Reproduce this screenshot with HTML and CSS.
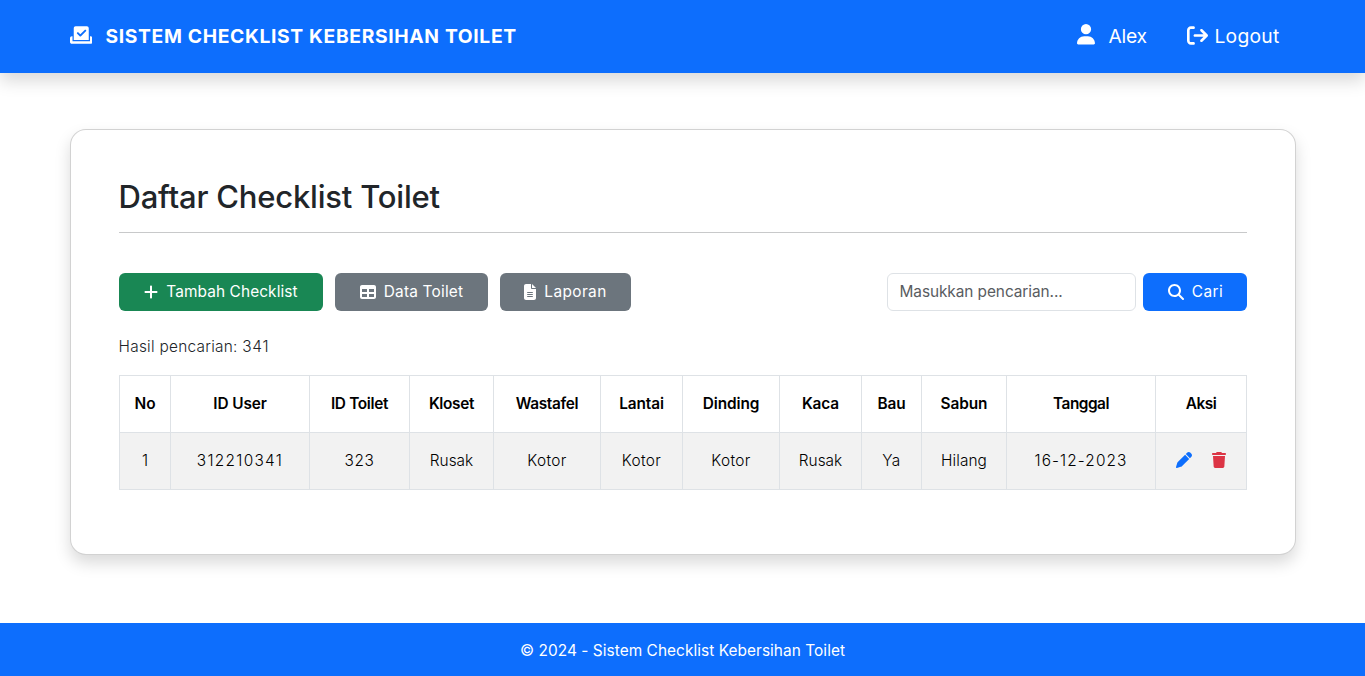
FILE: index.html
```html
<!DOCTYPE html>
<html lang="id">
<head>
<meta charset="utf-8">
<title>Sistem Checklist Kebersihan Toilet</title>
<link rel="stylesheet" href="styles.css">
</head>
<body>
<header class="navbar">
  <div class="container navbar-inner">
    <a class="brand">
      <svg class="brand-icon" viewBox="0 0 576 512"><path d="M96 80c0-26.500 21.500-48 48-48H432c26.500 0 48 21.500 48 48V384H96V80zm313 47c-9.400-9.400-24.600-9.400-33.900 0l-111 111-47-47c-9.400-9.400-24.600-9.400-33.900 0s-9.400 24.600 0 33.900l64 64c9.400 9.400 24.600 9.400 33.900 0L409 161c9.400-9.400 9.400-24.600 0-33.900zM0 336c0-26.500 21.500-48 48-48H64V416H512V288h16c26.500 0 48 21.500 48 48v96c0 26.500-21.500 48-48 48H48c-26.500 0-48-21.500-48-48V336z"/></svg>
      <span class="brand-name">SISTEM CHECKLIST KEBERSIHAN TOILET</span>
    </a>
    <nav class="nav">
      <a class="nav-user">
        <svg class="user-icon" viewBox="0 0 448 512"><path d="M224 256A128 128 0 1 0 224 0a128 128 0 1 0 0 256zm-45.700 48C79.800 304 0 383.800 0 482.300C0 498.700 13.300 512 29.700 512H418.300c16.400 0 29.700-13.300 29.700-29.700C448 383.800 368.200 304 269.700 304H178.300z"/></svg>
        <span>Alex</span>
      </a>
      <a class="nav-logout">
        <svg class="logout-icon" viewBox="0 0 512 512"><path d="M502.600 278.600c12.500-12.500 12.500-32.800 0-45.300l-128-128c-12.500-12.500-32.800-12.500-45.300 0s-12.500 32.800 0 45.300L402.700 224 192 224c-17.700 0-32 14.300-32 32s14.300 32 32 32l210.700 0-73.400 73.400c-12.500 12.500-12.500 32.800 0 45.300s32.800 12.500 45.300 0l128-128zM160 96c17.700 0 32-14.300 32-32s-14.300-32-32-32L96 32C43 32 0 75 0 128L0 384c0 53 43 96 96 96l64 0c17.700 0 32-14.300 32-32s-14.300-32-32-32l-64 0c-17.700 0-32-14.300-32-32l0-256c0-17.700 14.300-32 32-32l64 0z"/></svg>
        <span>Logout</span>
      </a>
    </nav>
  </div>
</header>

<main class="container card">
  <h2 class="title">Daftar Checklist Toilet</h2>
  <div class="toolbar">
    <a class="btn btn-add">
      <svg class="w14" viewBox="0 0 448 512"><path d="M256 80c0-17.700-14.300-32-32-32s-32 14.300-32 32V224H48c-17.700 0-32 14.300-32 32s14.300 32 32 32H192V432c0 17.700 14.300 32 32 32s32-14.300 32-32V288H400c17.700 0 32-14.300 32-32s-14.300-32-32-32H256V80z"/></svg>
      <span>Tambah Checklist</span>
    </a>
    <a class="btn btn-data">
      <svg class="w16" viewBox="0 0 512 512"><path d="M64 256V160H224v96H64zm0 64H224v96H64V320zm224 96V320H448v96H288zM448 256H288V160H448v96zM64 32C28.700 32 0 60.700 0 96V416c0 35.300 28.700 64 64 64H448c35.300 0 64-28.700 64-64V96c0-35.300-28.700-64-64-64H64z"/></svg>
      <span>Data Toilet</span>
    </a>
    <a class="btn btn-report">
      <svg class="w12" viewBox="0 0 384 512"><path d="M64 0C28.700 0 0 28.700 0 64V448c0 35.300 28.700 64 64 64H320c35.300 0 64-28.700 64-64V160H256c-17.700 0-32-14.300-32-32V0H64zM256 0V128H384L256 0zM112 256H272c8.800 0 16 7.200 16 16s-7.200 16-16 16H112c-8.800 0-16-7.200-16-16s7.200-16 16-16zm0 64H272c8.800 0 16 7.200 16 16s-7.200 16-16 16H112c-8.800 0-16-7.200-16-16s7.200-16 16-16zm0 64H272c8.800 0 16 7.200 16 16s-7.200 16-16 16H112c-8.800 0-16-7.200-16-16s7.200-16 16-16z"/></svg>
      <span>Laporan</span>
    </a>
    <form class="search">
      <input class="search-input" type="text" placeholder="Masukkan pencarian...">
      <button class="btn btn-search" type="button">
        <svg class="w16" viewBox="0 0 512 512"><path d="M416 208c0 45.900-14.900 88.300-40 122.700L502.600 457.400c12.500 12.500 12.500 32.800 0 45.300s-32.800 12.500-45.300 0L330.700 376c-34.400 25.200-76.800 40-122.700 40C93.100 416 0 322.900 0 208S93.100 0 208 0S416 93.100 416 208zM208 352a144 144 0 1 0 0-288 144 144 0 1 0 0 288z"/></svg>
        <span>Cari</span>
      </button>
    </form>
  </div>
  <p class="result">Hasil pencarian: <span class="digits">341</span></p>
  <table class="table">
    <colgroup>
      <col class="c-no"><col class="c-user"><col class="c-toilet"><col class="c-kloset"><col class="c-wastafel"><col class="c-lantai"><col class="c-dinding"><col class="c-kaca"><col class="c-bau"><col class="c-sabun"><col class="c-tanggal"><col class="c-aksi">
    </colgroup>
    <thead>
      <tr><th>No</th><th>ID User</th><th class="snug">ID Toilet</th><th class="snug">Kloset</th><th class="snug">Wastafel</th><th>Lantai</th><th>Dinding</th><th>Kaca</th><th>Bau</th><th>Sabun</th><th class="tight">Tanggal</th><th class="tight">Aksi</th></tr>
    </thead>
    <tbody>
      <tr>
        <td>1</td><td class="digits">312210341</td><td class="code">323</td><td>Rusak</td><td class="wide">Kotor</td><td class="wide">Kotor</td><td class="wide">Kotor</td><td>Rusak</td><td class="wide">Ya</td><td class="medium">Hilang</td><td class="date">16-12-2023</td>
        <td>
          <div class="actions">
            <svg class="w16 edit" viewBox="0 0 512 512"><path d="M362.700 19.300L314.300 67.700 444.300 197.700l48.400-48.400c25-25 25-65.500 0-90.500L453.300 19.300c-25-25-65.500-25-90.500 0zm-71 71L58.600 323.500c-10.400 10.400-18 23.300-22.200 37.400L1 481.200C-1.500 489.700 .8 498.800 7 505s15.300 8.500 23.700 6.100l120.300-35.400c14.100-4.200 27-11.800 37.400-22.200L421.700 220.300 291.700 90.300z"/></svg>
            <svg class="w14 delete" viewBox="0 0 448 512"><path d="M135.200 17.700L128 32H32C14.300 32 0 46.300 0 64S14.300 96 32 96H416c17.700 0 32-14.300 32-32s-14.300-32-32-32H320l-7.200-14.300C307.400 6.800 296.300 0 284.200 0H163.800c-12.100 0-23.200 6.800-28.600 17.700zM416 128H32L53.200 467c1.600 25.300 22.600 45 47.900 45H346.900c25.300 0 46.300-19.700 47.900-45L416 128z"/></svg>
          </div>
        </td>
      </tr>
    </tbody>
  </table>
</main>

<footer class="footer">© 2024 - Sistem Checklist Kebersihan Toilet</footer>
</body>
</html>
```
FILE: styles.css
```css
* { box-sizing: border-box; }

body {
  margin: 0;
  min-height: 100vh;
  display: flex;
  flex-direction: column;
  background: #fff;
  color: #212529;
  font-family: Inter, "Open Sans", sans-serif;
  font-size: 15.4px;
  line-height: 24px;
  overflow: hidden;
}

svg { display: block; fill: currentColor; flex: none; }

.container { width: 1226px; margin: 0 auto; }

.navbar {
  height: 73px;
  background: #0d6efd;
  color: #fff;
  box-shadow: 0 8px 16px rgba(0, 0, 0, .15);
}
.navbar-inner {
  height: 72px;
  display: flex;
  align-items: center;
  justify-content: space-between;
}
.brand { display: flex; align-items: center; gap: 13.5px; }
.brand-icon { width: 22.5px; height: 20px; margin-top: -2px; }
.brand-name { font-size: 19.3px; font-weight: 700; letter-spacing: .64px; }
.nav { display: flex; gap: 40px; padding-right: 16px; font-size: 19.3px; }
.nav-user, .nav-logout { display: flex; align-items: center; }
.nav-user { gap: 13px; letter-spacing: -.2px; }
.nav-user span { margin-top: -1px; }
.user-icon { width: 18px; height: 20.5px; margin-top: -3px; }
.nav-logout { gap: 6.5px; letter-spacing: .25px; }
.logout-icon { width: 21px; height: 21px; margin-top: -1px; }

.card {
  height: 426px;
  margin-top: 56px;
  padding: 48px;
  border: 1px solid rgba(0, 0, 0, .175);
  border-radius: 16px;
  background: #fff;
  box-shadow: 0 8px 16px rgba(0, 0, 0, .15);
}
.title {
  height: 55px;
  margin: 0 0 40px;
  border-bottom: 1px solid #c8c9ca;
  font-size: 31px;
  font-weight: 450;
  line-height: 37px;
  letter-spacing: -.2px;
}

.toolbar { display: flex; gap: 12px; }
.btn {
  height: 38px;
  display: flex;
  align-items: center;
  justify-content: center;
  gap: 8px;
  padding: 0 0 0 1px;
  border: 0;
  border-radius: 6px;
  color: #fff;
  font: inherit;
}
.btn svg { margin-top: -1px; }
.btn-add { width: 204px; background: #198754; letter-spacing: .1px; }
.btn-data { width: 153px; background: #6c757d; letter-spacing: .2px; }
.btn-report { width: 131px; background: #6c757d; letter-spacing: .4px; }
.btn-search { width: 104px; background: #0d6efd; letter-spacing: .5px; padding-left: 2px; }
.w12 { width: 12px; height: 16px; }
.w14 { width: 14px; height: 16px; }
.w16 { width: 16px; height: 16px; }

.search { display: flex; gap: 7px; margin-left: auto; }
.search-input {
  width: 249px;
  height: 38px;
  padding: 0 12px 1px;
  border: 1px solid #dee2e6;
  border-radius: 6px;
  font: inherit;
  letter-spacing: -.07px;
}
.search-input::placeholder { color: #595c5f; opacity: 1; }

.result { margin: 24px 0 16px; font-weight: 350; letter-spacing: .27px; }

.table {
  width: 1128px;
  table-layout: fixed;
  border-collapse: collapse;
  color: #000;
  text-align: center;
}
.table th, .table td {
  height: 57px;
  padding: 0 0 0 1px;
  border: 1px solid #dee2e6;
  vertical-align: middle;
}
.table th { font-weight: 600; letter-spacing: -.1px; }
.table td { background: #f2f2f2; font-weight: 350; }
.table .snug { letter-spacing: -.33px; }
.table .tight { letter-spacing: -.5px; }
.table .wide { letter-spacing: .4px; }
.table .medium { letter-spacing: .1px; }
.digits { letter-spacing: 1.3px; }
.result .digits { letter-spacing: .7px; }
.code { letter-spacing: .6px; }
.date { letter-spacing: 1.1px; }
.c-no { width: 51px; }
.c-user { width: 139px; }
.c-toilet { width: 100px; }
.c-kloset { width: 84px; }
.c-wastafel { width: 107px; }
.c-lantai { width: 82px; }
.c-dinding { width: 97px; }
.c-kaca { width: 82px; }
.c-bau { width: 60px; }
.c-sabun { width: 85px; }
.c-tanggal { width: 149px; }
.c-aksi { width: 91px; }
.actions { display: flex; justify-content: center; gap: 20px; padding-bottom: 2px; }
.edit { color: #0d6efd; }
.delete { color: #dc3545; }

.footer {
  height: 53px;
  margin-top: auto;
  padding-top: 16px;
  background: #0d6efd;
  color: #fff;
  text-align: center;
  letter-spacing: .06px;
}
```
